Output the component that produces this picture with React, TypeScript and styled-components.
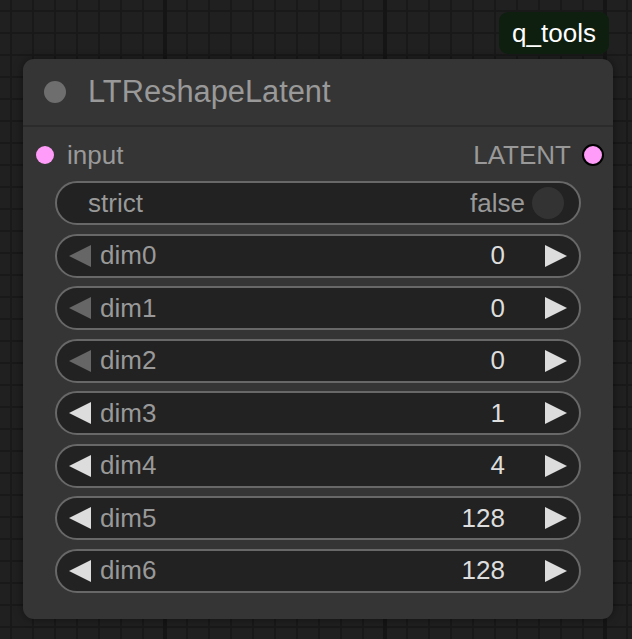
import React from "react";
import styled, { createGlobalStyle } from "styled-components";

const GlobalStyle = createGlobalStyle`
  html, body { margin: 0; padding: 0; background: #202020; }
  body { font-family: "Liberation Sans", Arial, sans-serif; }
`;

const Canvas = styled.div`
  position: relative;
  width: 632px;
  height: 639px;
  overflow: hidden;
  background-color: #202020;
  background-image:
    linear-gradient(to right, #151515 0 4px, transparent 4px),
    linear-gradient(to right, #191919 0 2px, transparent 2px),
    linear-gradient(to bottom, #191919 0 2px, transparent 2px);
  background-size: 220px 100%, 22px 100%, 100% 22px;
  background-position: 163px 0, 10px 0, 0 10px;
`;

const Badge = styled.div`
  position: absolute;
  left: 499px;
  top: 12px;
  width: 110px;
  height: 42px;
  border-radius: 9px;
  background: #0e1e0f;
  color: #ffffff;
  font-size: 26px;
  display: flex;
  align-items: center;
  justify-content: center;
`;

const Node = styled.div`
  position: absolute;
  left: 23px;
  top: 59px;
  width: 590px;
  height: 560px;
  border-radius: 11px;
  background: #353535;
  box-shadow: 0 0 10px rgba(0, 0, 0, 0.45);
  display: flex;
  flex-direction: column;
`;

const Title = styled.div`
  display: flex;
  align-items: center;
  gap: 22px;
  padding-left: 21px;
  border-bottom: 2px solid #2b2b2b;
  color: #999;
  font-size: 30.8px;
  box-sizing: border-box;
  height: 68px;
`;

const TitleDot = styled.span`
  width: 22px;
  height: 22px;
  border-radius: 50%;
  background: #6e6e6e;
  flex: none;
`;

const Body = styled.div`
  padding: 6px 0 0;
  display: flex;
  flex-direction: column;
`;

const SlotRow = styled.div`
  height: 44px;
  margin-bottom: 4px;
  display: flex;
  align-items: center;
  justify-content: space-between;
  padding: 0 9px 0 13px;
  color: #999;
  font-size: 26px;
`;

const Slot = styled.div<{ $gap: number }>`
  display: flex;
  align-items: center;
  gap: ${(p) => p.$gap}px;
`;

const SlotDot = styled.span<{ $outlined?: boolean }>`
  width: 18px;
  height: 18px;
  border-radius: 50%;
  background: #ff9cf9;
  box-sizing: content-box;
  border: ${(p) => (p.$outlined ? "2px solid #000" : "0")};
`;

const Widgets = styled.div`
  display: flex;
  flex-direction: column;
  gap: 8.5px;
  margin: 0 32px;
`;

const Widget = styled.div<{ $toggle?: boolean }>`
  height: 44px;
  box-sizing: border-box;
  border: 2px solid #686868;
  border-radius: 22px;
  background: #222222;
  display: flex;
  align-items: center;
  padding: ${(p) => (p.$toggle ? "0 15px 0 31px" : "0 12px")};
  font-size: 26px;
`;

const Label = styled.span<{ $gap?: number }>`
  color: #999;
  margin-left: ${(p) => p.$gap ?? 0}px;
  flex: 1;
`;

const Value = styled.span<{ $muted?: boolean }>`
  color: ${(p) => (p.$muted ? "#999" : "#ddd")};
`;

const Knob = styled.span`
  width: 32px;
  height: 32px;
  border-radius: 50%;
  background: #333;
  margin-left: 7px;
`;

const Arrow = styled.svg<{ $gap?: number }>`
  width: 22px;
  height: 22px;
  flex: none;
  margin-left: ${(p) => p.$gap ?? 0}px;
`;

const Tri = ({ dir, dim, gap }: { dir: "l" | "r"; dim?: boolean; gap?: number }) => (
  <Arrow viewBox="0 0 22 22" $gap={gap}>
    <polygon
      points={dir === "l" ? "22,0 22,22 0,11" : "0,0 0,22 22,11"}
      fill={dim ? "#666" : "#ddd"}
    />
  </Arrow>
);

const dims = [
  { name: "dim0", value: "0", min: true },
  { name: "dim1", value: "0", min: true },
  { name: "dim2", value: "0", min: true },
  { name: "dim3", value: "1" },
  { name: "dim4", value: "4" },
  { name: "dim5", value: "128" },
  { name: "dim6", value: "128" },
];

export default function App() {
  return (
    <>
      <GlobalStyle />
      <Canvas>
        <Node>
          <Title>
            <TitleDot />
            LTReshapeLatent
          </Title>
          <Body>
            <SlotRow>
              <Slot $gap={13}>
                <SlotDot />
                input
              </Slot>
              <Slot $gap={11}>
                LATENT
                <SlotDot $outlined />
              </Slot>
            </SlotRow>
            <Widgets>
              <Widget $toggle>
                <Label>strict</Label>
                <Value $muted>false</Value>
                <Knob />
              </Widget>
              {dims.map((d) => (
                <Widget key={d.name}>
                  <Tri dir="l" dim={d.min} />
                  <Label $gap={9}>{d.name}</Label>
                  <Value>{d.value}</Value>
                  <Tri dir="r" gap={40} />
                </Widget>
              ))}
            </Widgets>
          </Body>
        </Node>
        <Badge>q_tools</Badge>
      </Canvas>
    </>
  );
}
